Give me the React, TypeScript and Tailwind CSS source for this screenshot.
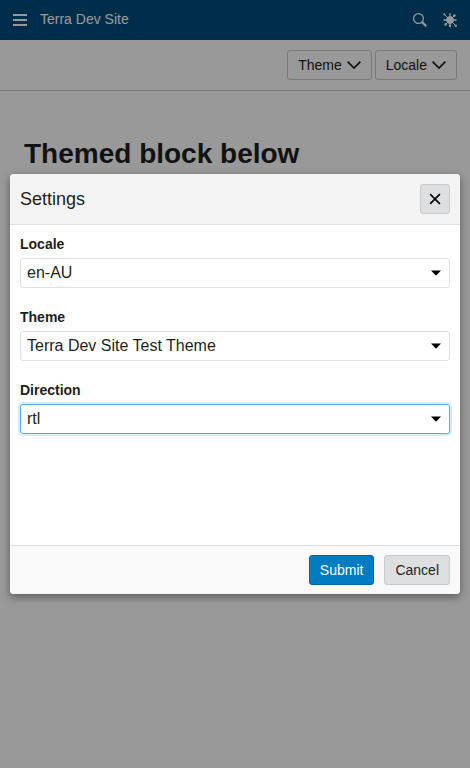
import React from 'react';

function ChevronDown() {
  return (
    <svg className="h-3.5 w-3.5" viewBox="0 0 14 14" fill="none" stroke="#1c1f21" strokeWidth="1.7">
      <path d="M0.6 3.600 7 10l6.400-6.400" />
    </svg>
  );
}

function ToolbarButton({ label }: { label: string }) {
  return (
    <button className="flex h-[30px] items-center gap-[5px] rounded-[3px] border border-[#c8cacb] px-2.5 text-sm text-[#1c1f21]">
      {label}
      <ChevronDown />
    </button>
  );
}

function Field({ label, value, focused = false }: { label: string; value: string; focused?: boolean }) {
  return (
    <div className="h-[73px]">
      <div className="mb-1 h-5 text-sm leading-5 font-bold">{label}</div>
      <div
        className={
          focused
            ? 'flex h-[30px] items-center justify-between rounded-[3px] border border-[#4cb2e9] pr-[7px] pl-1.5 shadow-[0_0_1px_2px_rgba(76,178,233,0.25)]'
            : 'flex h-[30px] items-center justify-between rounded-[3px] border border-[#dedfe0] pr-[7px] pl-1.5'
        }
      >
        <span className="text-base leading-7">{value}</span>
        <svg className="h-[6px] w-3" viewBox="0 0 12 6" fill="#000">
          <path d="M1 0.500h10L6.700 5.100q-.7.600-1.400 0z" />
        </svg>
      </div>
    </div>
  );
}

export default function App() {
  return (
    <div className="relative h-[768px] w-full overflow-hidden bg-white font-['Liberation_Sans',Arial,sans-serif] text-[#1c1f21]">
      <header className="flex h-10 items-center bg-[#004c7b] px-[13px] text-white">
        <svg className="h-3.5 w-3.5" viewBox="0 0 14 14" fill="currentColor">
          <path d="M0 1h14v2H0zM0 6h14v2H0zM0 11h14v2H0z" />
        </svg>
        <span className="ml-[13px] -mt-0.5 text-sm">Terra Dev Site</span>
        <div className="ml-auto flex gap-4">
          <svg className="h-3.5 w-3.5" viewBox="0 0 14 14" fill="none" stroke="currentColor">
            <circle cx="5.500" cy="5.500" r="4.900" strokeWidth="1.200" />
            <path d="m9 9 4.300 4.300" strokeWidth="2.100" />
          </svg>
          <svg className="h-3.5 w-3.5" viewBox="0 0 14 14" fill="currentColor" stroke="currentColor">
            <circle cx="7" cy="7" r="3.500" />
            <path d="M7 0v3M7 11v3M0.500 7h3M10.500 7h3" strokeWidth="1.300" />
            <path d="m1 1 4 4M9 9l4 4M11.500 2.500 9 5M5 9l-2.500 2.500" strokeWidth="1" />
            <g stroke="none">
              <circle cx="1.300" cy="1.300" r="1.100" />
              <circle cx="11.400" cy="2.600" r="1.300" />
              <circle cx="2.600" cy="11.400" r="1.300" />
              <circle cx="12.800" cy="12.800" r="1.200" />
              <circle cx="7" cy="12.700" r="1.200" />
            </g>
          </svg>
        </div>
      </header>

      <div className="flex h-[51px] items-center justify-end gap-[3px] border-b border-[#c8cacb] pr-[13px]">
        <ToolbarButton label="Theme" />
        <ToolbarButton label="Locale" />
      </div>
      <h1 className="mt-[47px] ml-6 text-[28px] leading-8 font-bold">Themed block below</h1>

      <div className="absolute inset-0 flex items-center justify-center bg-black/40 px-2.5">
        <section
          role="dialog"
          className="flex h-[420px] w-full flex-col overflow-hidden rounded-[4px] bg-white shadow-[0_3px_8px_rgba(0,0,0,0.4)]"
        >
          <div className="flex h-[51px] items-center justify-between border-b border-[#dedfe0] bg-[#f4f4f4] px-2.5">
            <h2 className="text-lg">Settings</h2>
            <button
              aria-label="Close"
              className="flex h-[30px] w-[30px] items-center justify-center rounded-[3px] border border-[#c8cacb] bg-[#dedfe0]"
            >
              <svg className="h-3 w-3" viewBox="0 0 12 12" fill="none" stroke="#000" strokeWidth="1.7">
                <path d="m1.100 1.100 9.800 9.800M10.900 1.100 1.100 10.900" />
              </svg>
            </button>
          </div>
          <div className="flex-1 px-2.5 pt-[9px]">
            <Field label="Locale" value="en-AU" />
            <Field label="Theme" value="Terra Dev Site Test Theme" />
            <Field label="Direction" value="rtl" focused />
          </div>
          <footer className="flex h-[49px] items-center justify-end gap-2.5 border-t border-[#dedfe0] bg-[#f9f9f9] px-2.5">
            <button className="h-[30px] rounded-[3px] border border-[#0065a3] bg-[#007cc3] px-2.5 text-sm text-white">
              Submit
            </button>
            <button className="h-[30px] rounded-[3px] border border-[#c8cacb] bg-[#dedfe0] px-2.5 text-sm">
              Cancel
            </button>
          </footer>
        </section>
      </div>
    </div>
  );
}
